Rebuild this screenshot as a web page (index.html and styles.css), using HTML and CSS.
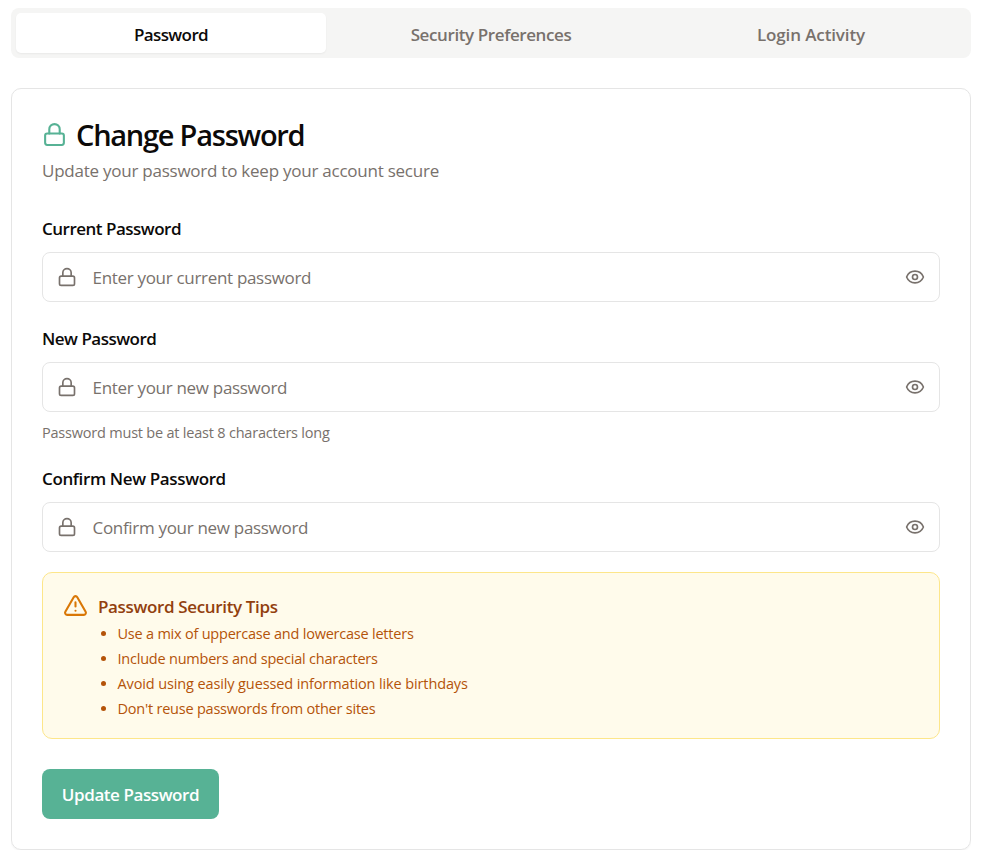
FILE: index.html
```html
<!DOCTYPE html>
<html lang="en">
<head>
<meta charset="utf-8">
<title>Change Password</title>
<link rel="stylesheet" href="styles.css">
</head>
<body>
<svg class="sprite" aria-hidden="true">
  <symbol id="lock" viewBox="0 0 24 24"><rect x="3" y="11" width="18" height="11" rx="2"/><path d="M7 11V7a5 5 0 0 1 10 0v4"/></symbol>
  <symbol id="eye" viewBox="0 0 24 24"><path d="M2.06 12.35a1 1 0 0 1 0-.7 10.75 10.75 0 0 1 19.88 0 1 1 0 0 1 0 .7 10.75 10.75 0 0 1-19.88 0"/><circle cx="12" cy="12" r="3"/></symbol>
  <symbol id="warning" viewBox="0 0 24 24"><path d="m21.73 18-8-14a2 2 0 0 0-3.48 0l-8 14A2 2 0 0 0 4 21h16a2 2 0 0 0 1.73-3"/><path d="M12 9v4"/><path d="M12 17h.01"/></symbol>
</svg>
<nav class="tabs">
  <button class="tab tab-active">Password</button>
  <button class="tab">Security Preferences</button>
  <button class="tab tab-activity">Login Activity</button>
</nav>
<main class="card">
  <h1 class="title"><svg class="icon icon-lg"><use href="#lock"/></svg><span>Change Password</span></h1>
  <p class="subtitle">Update your password to keep your account secure</p>
  <form class="form">
    <div class="field">
      <label class="label label-tight" for="current">Current Password</label>
      <div class="control"><svg class="icon"><use href="#lock"/></svg><input id="current" type="password" placeholder="Enter your current password"><svg class="icon"><use href="#eye"/></svg></div>
    </div>
    <div class="field">
      <label class="label label-tight" for="new">New Password</label>
      <div class="control"><svg class="icon"><use href="#lock"/></svg><input id="new" type="password" placeholder="Enter your new password"><svg class="icon"><use href="#eye"/></svg></div>
      <p class="hint">Password must be at least 8 characters long</p>
    </div>
    <div class="field">
      <label class="label" for="confirm">Confirm New Password</label>
      <div class="control"><svg class="icon"><use href="#lock"/></svg><input id="confirm" type="password" placeholder="Confirm your new password"><svg class="icon"><use href="#eye"/></svg></div>
    </div>
    <section class="tips">
      <svg class="icon icon-lg"><use href="#warning"/></svg>
      <div>
        <h2 class="tips-title">Password Security Tips</h2>
        <ul class="tips-list">
          <li>Use a mix of uppercase and lowercase letters</li>
          <li>Include numbers and special characters</li>
          <li class="tip-wide">Avoid using easily guessed information like birthdays</li>
          <li>Don't reuse passwords from other sites</li>
        </ul>
      </div>
    </section>
    <button class="submit" type="button">Update Password</button>
  </form>
</main>
</body>
</html>
```

FILE: styles.css
```css
* { box-sizing: border-box; }
body { margin: 8px 17px 0 11px; background: #fff; color: #0c0a09; font-family: "Open Sans", "Noto Sans", sans-serif; font-size: 17.5px; }
h1, h2, p, ul { margin: 0; }
button, input { font: inherit; border: 0; }
.sprite { display: none; }
.icon { width: 20px; height: 20px; flex: none; fill: none; stroke: #78716c; stroke-width: 2; stroke-linecap: round; stroke-linejoin: round; }
.icon-lg { width: 25px; height: 25px; }
.tabs { display: grid; grid-template-columns: 31fr 33fr 31fr; height: 50px; padding: 5px; border-radius: 8px; background: #f5f5f4; }
.tab { padding: 2px 0 0; border-radius: 5px; background: none; color: #78716c; font-size: 17px; font-weight: 600; letter-spacing: -.4px; }
.tab-active { background: #fff; color: #0c0a09; letter-spacing: -.6px; box-shadow: 0 1px 2px rgba(0,0,0,.05); }
.tab-activity { letter-spacing: -.12px; }
.card { height: 762px; margin-top: 30px; padding: 30px; border: 1px solid #e5e5e5; border-radius: 10px; box-shadow: 0 1px 2px rgba(0,0,0,.05); }
.title { display: flex; align-items: center; gap: 9px; height: 30px; font-size: 29px; font-weight: 600; letter-spacing: -1.25px; line-height: 30px; }
.title span { padding-top: 2px; }
.title .icon { stroke: #57b295; }
.subtitle { height: 25px; margin-top: 9px; font-size: 17px; line-height: 25px; color: #78716c; letter-spacing: -.24px; }
.form { display: flex; flex-direction: column; margin-top: 34px; }
.field { margin-bottom: 25px; }
.label { display: block; height: 25px; margin-bottom: 10px; font-size: 17px; font-weight: 600; line-height: 23px; letter-spacing: -.37px; }
.label-tight { letter-spacing: -.5px; }
.control { display: flex; align-items: center; gap: 15px; height: 50px; padding: 0 14px; border: 1px solid #e5e5e5; border-radius: 8px; }
.control input { flex: 1; min-width: 0; height: 40px; padding: 0 0 0 .5px; outline: 0; background: none; font-size: 17px; letter-spacing: -.31px; }
.control input::placeholder { color: #78716c; opacity: 1; }
.hint { height: 20px; margin-top: 10px; font-size: 14.5px; line-height: 22px; color: #78716c; letter-spacing: -.21px; }
.tips { display: flex; gap: 10px; height: 167px; margin-top: -5px; padding: 20px; border: 1px solid #fde68a; border-radius: 10px; background: #fffbeb; }
.tips .icon { stroke: #d97706; }
.tips-title { font-size: 17px; font-weight: 600; line-height: 28px; color: #92400e; letter-spacing: -.35px; }
.tips-list { padding-left: 19.5px; color: #b45309; font-size: 14.5px; line-height: 25px; letter-spacing: -.22px; }
.tip-wide { letter-spacing: -.12px; }
.submit { align-self: flex-start; width: 177px; height: 50px; margin-top: 30px; padding: 1px 0 0; border-radius: 8px; background: #57b295; color: #fff; font-size: 17px; font-weight: 600; letter-spacing: -.42px; }
```
